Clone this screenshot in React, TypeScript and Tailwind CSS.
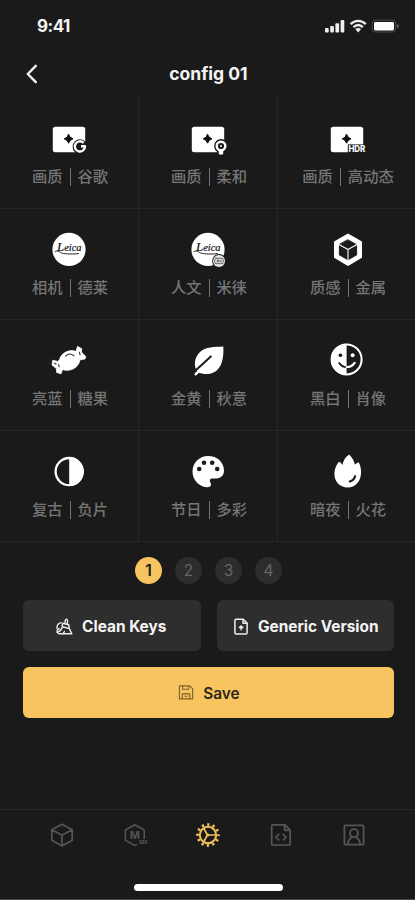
import type { ReactNode } from "react";

function Icon({ children, className = "text-white" }: { children: ReactNode; className?: string }) {
  return (
    <svg viewBox="0 0 40 40" className={`h-10 w-10 shrink-0 ${className}`} fill="none" strokeLinecap="round" strokeLinejoin="round">
      {children}
    </svg>
  );
}

function Picture({ children }: { children: ReactNode }) {
  return (
    <Icon>
      <rect x="3.8" y="6.8" width="32.4" height="25.4" rx="2.5" fill="#fff" />
      <path d="M19.6 14.4 L21.2 17.2 L24 18.8 L21.2 20.4 L19.6 23.2 L18 20.4 L15.2 18.8 L18 17.2Z" fill="#111" stroke="#111" strokeWidth="1" />
      {children}
    </Icon>
  );
}

function LeicaMark({ children }: { children?: ReactNode }) {
  return (
    <Icon>
      <circle cx="20" cy="19.4" r="16.6" fill="#fff" />
      <text x="8" y="21.4" fill="#111" stroke="#111" strokeWidth=".2" fontFamily="Liberation Serif, serif" fontStyle="italic" fontWeight="400" fontSize="10.5" textLength="24.5" lengthAdjust="spacingAndGlyphs">
        <tspan fontSize="13">L</tspan>eica
      </text>
      <path d="M6 21.6 C8.6 19.8 10.6 22.4 13.4 23.2 S25 24.4 29.5 23.6" stroke="#222" strokeWidth="1" />
      {children}
    </Icon>
  );
}

const presets: { left: string; right: string; icon: ReactNode }[] = [
  {
    left: "画质",
    right: "谷歌",
    icon: (
      <Picture>
        <circle cx="31" cy="26.7" r="7.4" fill="#1a1a1a" />
        <path d="M34.6 22.9 A5.1 5.1 0 1 0 36 26.3 H32" stroke="#fff" strokeWidth="2.4" strokeLinecap="butt" />
      </Picture>
    ),
  },
  {
    left: "画质",
    right: "柔和",
    icon: (
      <Picture>
        <circle cx="33" cy="26" r="6.9" fill="#1a1a1a" />
        <path d="M29 27 H37 V34.5 Q37 36 33 36 Q29 36 29 34.5Z" fill="#1a1a1a" />
        <circle cx="33" cy="26" r="4.3" stroke="#fff" strokeWidth="2.4" />
        <path d="M30.8 30 H35.2 V34 Q33 35.6 30.8 34Z" fill="#fff" />
        <circle cx="33" cy="26" r="1" fill="#fff" />
      </Picture>
    ),
  },
  {
    left: "画质",
    right: "高动态",
    icon: (
      <Picture>
        <path d="M20.8 24.4 H38.6 V33.4 H20.8Z" fill="#1a1a1a" />
        <text x="21.4" y="32.4" fill="#fff" fontFamily="Inter, sans-serif" fontWeight="800" fontSize="9.2" textLength="17" lengthAdjust="spacingAndGlyphs">HDR</text>
      </Picture>
    ),
  },
  { left: "相机", right: "德莱", icon: <LeicaMark /> },
  {
    left: "人文",
    right: "米徕",
    icon: (
      <LeicaMark>
        <circle cx="31" cy="31" r="6.9" fill="#1a1a1a" />
        <circle cx="31" cy="31" r="6" fill="#e8e8e8" />
        <rect x="26.8" y="28.3" width="8.4" height="5.4" rx="1.2" stroke="#555" strokeWidth=".9" />
        <path d="M29.3 32 V30.2 H31 V32 M33 30.2 V32" stroke="#444" strokeWidth=".9" />
      </LeicaMark>
    ),
  },
  {
    left: "质感",
    right: "金属",
    icon: (
      <Icon>
        <g transform="translate(.8 0)">
          <path d="M20.2 4.6 L33.2 12 V27.2 L20.2 34.8 L7.2 27.2 V12Z" fill="#fff" stroke="#fff" strokeWidth="2" />
          <path d="M20.2 9.9 L28.8 14.7 V24.9 L20.2 29.8 L11.6 24.9 V14.7Z" fill="#1a1a1a" stroke="#1a1a1a" />
          <path d="M11.6 14.7 L20.2 19.5 L28.8 14.7 M20.2 19.5 V29.8" stroke="#fff" strokeWidth="1.1" />
        </g>
      </Icon>
    ),
  },
  {
    left: "亮蓝",
    right: "糖果",
    icon: (
      <Icon>
        <path d="M10.6 19.6 C12 13 20.4 8.8 27 11.4 L28.6 6.4 L32.8 8.8 L32.4 12 L36.8 16.6 L36 19 L31 19.8 C29.8 28 20.4 32.4 13.6 29.4 L12 33.8 L7.6 32.4 L7.4 28.6 L3 25 L3.8 20.2 L8.6 21.4Z" fill="#fff" stroke="#fff" strokeWidth=".8" />
        <path d="M16.6 16.2 C19.2 13.6 22.6 13.6 25 15.8 M30.4 12.4 L31 14.6 M9.6 24.6 L10.2 26.8 M5.6 23.2 L7 24" stroke="#333" strokeWidth="1.1" />
      </Icon>
    ),
  },
  {
    left: "金黄",
    right: "秋意",
    icon: (
      <Icon>
        <path d="M35.3 6.5 C36 19 33.5 27.5 27 31.7 C21.5 35.2 14.5 34.2 9.5 32.2 C5.2 26 6.2 17 12.5 11.5 C18 6.8 26 7 35.3 6.5Z" fill="#fff" />
        <path d="M6.8 31.2 L22.8 16.4" stroke="#1a1a1a" strokeWidth="2" />
        <path d="M7.8 34.2 L12.5 29.4" stroke="#fff" strokeWidth="2.6" />
      </Icon>
    ),
  },
  {
    left: "黑白",
    right: "肖像",
    icon: (
      <Icon>
        <g transform="translate(.4 0)">
          <circle cx="19.2" cy="19.4" r="15" fill="#1a1a1a" stroke="#fff" strokeWidth="2" />
          <path d="M19.2 3.8 A15.6 15.6 0 0 0 19.2 35Z" fill="#fff" />
          <circle cx="13" cy="15.2" r="1.8" fill="#111" />
          <circle cx="25.2" cy="15.2" r="2" fill="#fff" />
          <path d="M12 23.2 Q14.5 27 19.2 27" stroke="#111" strokeWidth="2" />
          <path d="M19.2 27 Q24.5 27 27.2 22.8" stroke="#fff" strokeWidth="2.2" />
        </g>
      </Icon>
    ),
  },
  {
    left: "复古",
    right: "负片",
    icon: (
      <Icon>
        <circle cx="20.2" cy="20.6" r="13.6" stroke="#fff" strokeWidth="2.3" />
        <path d="M20.2 6.2 A14.4 14.4 0 0 1 20.2 35Z" fill="#fff" />
      </Icon>
    ),
  },
  {
    left: "节日",
    right: "多彩",
    icon: (
      <Icon>
        <path d="M20 5 C11.2 5 4.5 12 4.5 20.5 C4.5 29.2 11.5 36.3 19.5 36.3 C22.8 36.3 23.8 34 22.4 31.6 C20.8 28.7 22.6 27.2 25.2 27.4 H28.5 C33 27.4 36 24 36 19.5 C36 11 29 5 20 5Z" fill="#fff" />
        <circle cx="11.2" cy="18" r="2.3" fill="#1a1a1a" />
        <circle cx="16" cy="11.8" r="2.3" fill="#1a1a1a" />
        <circle cx="24.2" cy="11.8" r="2.3" fill="#1a1a1a" />
        <circle cx="29.2" cy="18" r="2.3" fill="#1a1a1a" />
      </Icon>
    ),
  },
  {
    left: "暗夜",
    right: "火花",
    icon: (
      <Icon>
        <g transform="translate(.6 -.4)">
          <path d="M21.5 3.8 C25 7.5 26.5 10 27.3 14 C28.8 12.8 29.5 12.2 31 11.7 C33 15 33.7 19 33.4 23.2 C32.9 31 27.6 36.9 20.2 36.9 C12 36.9 6.8 31 6.8 23.5 C6.8 18.8 8.6 14 11.4 11.2 C12.8 11.8 14.2 13 14.7 14.3 C15.8 9.5 18 6.2 21.5 3.8Z" fill="#fff" />
          <path d="M22.2 30.9 C25.3 29.8 27 27.8 27.5 25.6" stroke="#1a1a1a" strokeWidth="2.2" />
        </g>
      </Icon>
    ),
  },
];

const rowGap = ["pb-[7px]", "pb-2", "pb-[9px]", "pb-[9px]"];

function StatusBar() {
  return (
    <div className="flex h-[52px] items-center justify-between pr-[15px] pl-[37px]">
      <span className="text-[17px] leading-5 font-bold tracking-[-0.5px]">9:41</span>
      <svg viewBox="0 0 76 16" className="h-4 w-[76px]" fill="#eee">
        <rect x="1" y="10" width="3.7" height="4.4" rx="1" />
        <rect x="6.2" y="8" width="3.7" height="6.4" rx="1" />
        <rect x="11.4" y="5.2" width="3.7" height="9.2" rx="1" />
        <rect x="16.6" y="2" width="3.7" height="12.4" rx="1" />
        <g fill="none" stroke="#eee" strokeWidth="2.3">
          <path d="M26.6 6.1 C31 1.8 37.4 1.8 41.8 6.1" />
          <path d="M29.5 9.2 C32.4 6.4 36 6.4 38.9 9.2" />
        </g>
        <path d="M31.3 11.1 Q34.2 8.9 37.1 11.1 L34.2 14.4Z" />
        <rect x="48.2" y="2.2" width="23.6" height="11.8" rx="3" fill="none" stroke="#4a4a4a" />
        <rect x="50" y="4" width="20" height="8.4" rx="1.3" fill="#fff" />
        <path d="M73.2 6 Q75 6.5 75 8 Q75 9.6 73.2 10.2Z" fill="#666" />
      </svg>
    </div>
  );
}

function CleanIcon() {
  return (
    <svg viewBox="0 0 18 20" className="h-5 w-[18px]" fill="none" stroke="#eee" strokeWidth="1.4" strokeLinecap="round" strokeLinejoin="round">
      <path d="M9.8 6.4 L10.4 3.2 Q11.6 1 12.6 3.4 L12.2 7" />
      <path d="M7.6 6.2 L13.8 7.8 L14.2 11.4 L16.8 16.8 H4 L1.8 15 Q5.8 14.6 7.2 10.2Z M7.4 9.8 L13.8 11.4" />
      <path d="M2 11.4 Q1.6 6.8 6 5.6 M8 16.6 L9.4 14.6 M2 13.4 L4.2 11.4" />
    </svg>
  );
}

function VersionIcon() {
  return (
    <svg viewBox="0 0 18 20" className="h-5 w-[18px]" fill="none" stroke="#eee" strokeWidth="1.5" strokeLinecap="round" strokeLinejoin="round">
      <path d="M11.2 2.2 H4.2 Q2.9 2.2 2.9 3.6 V15.8 Q2.9 17 4.2 17 H13.9 Q15.1 17 15.1 15.8 V6.1Z" />
      <path d="M11 2.6 V6.2 H14.8" />
      <path d="M9.1 12.8 V9.2 M7.4 10.6 L9.1 9 L10.8 10.6Z" fill="#eee" />
    </svg>
  );
}

function SaveIcon() {
  return (
    <svg viewBox="0 0 18 18" className="h-[18px] w-[18px]" fill="none" stroke="#7d602c" strokeWidth="1.1" strokeLinejoin="round">
      <path d="M2.4 1.9 H12.8 L15.6 4.7 V14.9 H2.4Z" />
      <path d="M5.6 2.1 V5.2 H11.7 V2.1 M5.2 14.7 V9.9 H12.8 V14.7 M7.4 12.3 H10.6" />
    </svg>
  );
}

function TabBar() {
  return (
    <nav className="mt-auto flex h-[90px] flex-col items-center border-t border-[#292929]">
      <div className="mt-[5px] flex w-full justify-between pr-[41px] pl-[42px]">
        <Icon className="text-[#555]">
          <path d="M20 9.3 L30.2 14.7 V25.3 L20 31 L9.8 25.3 V14.7Z M9.9 14.8 L20 20.2 L30.1 14.8 M20 20.2 V30.8" stroke="currentColor" strokeWidth="1.7" />
        </Icon>
        <Icon className="text-[#555]">
          <path d="M29.2 23.4 V15 L19.8 9.8 L10.4 15 V25.4 L19.8 30.4 L21.4 29.6" stroke="currentColor" strokeWidth="1.6" />
          <text x="14.8" y="23.8" fill="currentColor" fontFamily="Inter, sans-serif" fontSize="11" fontWeight="700">M</text>
          <text x="23.4" y="29.4" fill="currentColor" fontFamily="Inter, sans-serif" fontSize="4.6" fontWeight="800">365</text>
        </Icon>
        <Icon className="text-[#efbd58]">
          <circle cx="20" cy="20" r="8.2" stroke="currentColor" strokeWidth="2" />
          <circle cx="20" cy="20" r="10.4" stroke="currentColor" strokeWidth="2.8" strokeLinecap="butt" strokeDasharray="2.3 3.145" strokeDashoffset="1.15" />
          <path d="M15.9 13.5 L19.4 20 L15.9 26.5 M20 20 H27.5" stroke="currentColor" strokeWidth="1.7" />
          <circle cx="19.8" cy="20" r="1.5" fill="currentColor" />
        </Icon>
        <Icon className="text-[#555]">
          <path d="M24 9.9 H11.7 Q10.7 9.9 10.7 10.9 V29 Q10.7 30 11.7 30 H28.2 Q29.2 30 29.2 29 V15.2Z M23.7 10.3 V15.3 H28.8 M17.8 19.4 L14.9 22.2 L17.8 25 M22.2 19.4 L25.1 22.2 L22.2 25" stroke="currentColor" strokeWidth="1.7" />
        </Icon>
        <Icon className="text-[#555]">
          <rect x="10.4" y="10.4" width="19.2" height="19.2" rx="1" stroke="currentColor" strokeWidth="1.8" />
          <circle cx="20" cy="18.2" r="4" stroke="currentColor" strokeWidth="1.8" />
          <path d="M14 29 C14 25.8 16.2 23.3 18 22 M22 22 C23.8 23.3 26 25.8 26 29" stroke="currentColor" strokeWidth="1.8" />
        </Icon>
      </div>
      <div className="mt-[29px] ml-0.5 h-[7px] w-[149px] rounded-full bg-white" />
    </nav>
  );
}

export default function App() {
  return (
    <main className="flex h-[900px] w-[415px] flex-col overflow-hidden border-b border-[#4a4a4a] bg-[#1a1a1a] font-['Inter','Noto_Sans_CJK_SC',sans-serif] text-[#f4f4f4]">
      <StatusBar />
      <header className="grid h-[45px] grid-cols-[40px_1fr_40px] items-center pr-[22px] pl-[23px]">
        <svg viewBox="0 0 16 22" className="h-[22px] w-4" fill="none" stroke="#eee" strokeWidth="2.5" strokeLinecap="round" strokeLinejoin="round">
          <path d="M12.8 1.8 L4.8 10 L12.8 18.2" />
        </svg>
        <h1 className="pb-px pl-px text-center text-[17.5px] leading-6 font-bold">config 01</h1>
      </header>
      <section className="grid h-[445px] shrink-0 grid-cols-[139px_139px_137px] grid-rows-[112px_111px_111px_111px]">
        {presets.map((p, i) => (
          <div key={i} className={`flex flex-col items-center justify-end border-b border-[#262626] pb-[21px] ${i % 3 < 2 ? "border-r" : "pl-px"}`}>
            <div className={rowGap[Math.floor(i / 3)]}>{p.icon}</div>
            <div className="flex h-5 items-center gap-[7px] pl-[2px] text-[15.3px] leading-5 font-medium text-[#757575]">
              <span>{p.left}</span>
              <span className="h-[18px] w-px bg-[#757575]" />
              <span>{p.right}</span>
            </div>
          </div>
        ))}
      </section>
      <div className="mt-[15px] flex h-[27px] items-center justify-center gap-[13px] pl-0.5 text-[15.5px]">
        {[1, 2, 3, 4].map((n) => (
          <button key={n} className={`flex h-[27px] w-[27px] items-center justify-center rounded-full pt-px ${n === 1 ? "bg-[#f7c45f] font-semibold text-[#1a1a1a]" : "bg-[#2d2d2d] text-[#666]"}`}>{n}</button>
        ))}
      </div>
      <div className="mt-4 grid grid-cols-2 gap-x-4 gap-y-4 pr-[21px] pl-[23px] text-[15.4px] font-bold">
        <button className="flex h-[51px] items-center justify-center gap-[9px] rounded-md bg-[#2e2e2e] pt-0.5 pr-0.5">
          <CleanIcon />Clean Keys
        </button>
        <button className="flex h-[51px] items-center justify-center gap-2 rounded-md bg-[#2e2e2e] pt-0.5">
          <VersionIcon />Generic Version
        </button>
        <button className="col-span-2 flex h-[51px] items-center justify-center gap-2 rounded-md bg-[#f7c45f] font-semibold text-[#2c2618]">
          <SaveIcon /><span className="pt-0.5">Save</span>
        </button>
      </div>
      <TabBar />
    </main>
  );
}
